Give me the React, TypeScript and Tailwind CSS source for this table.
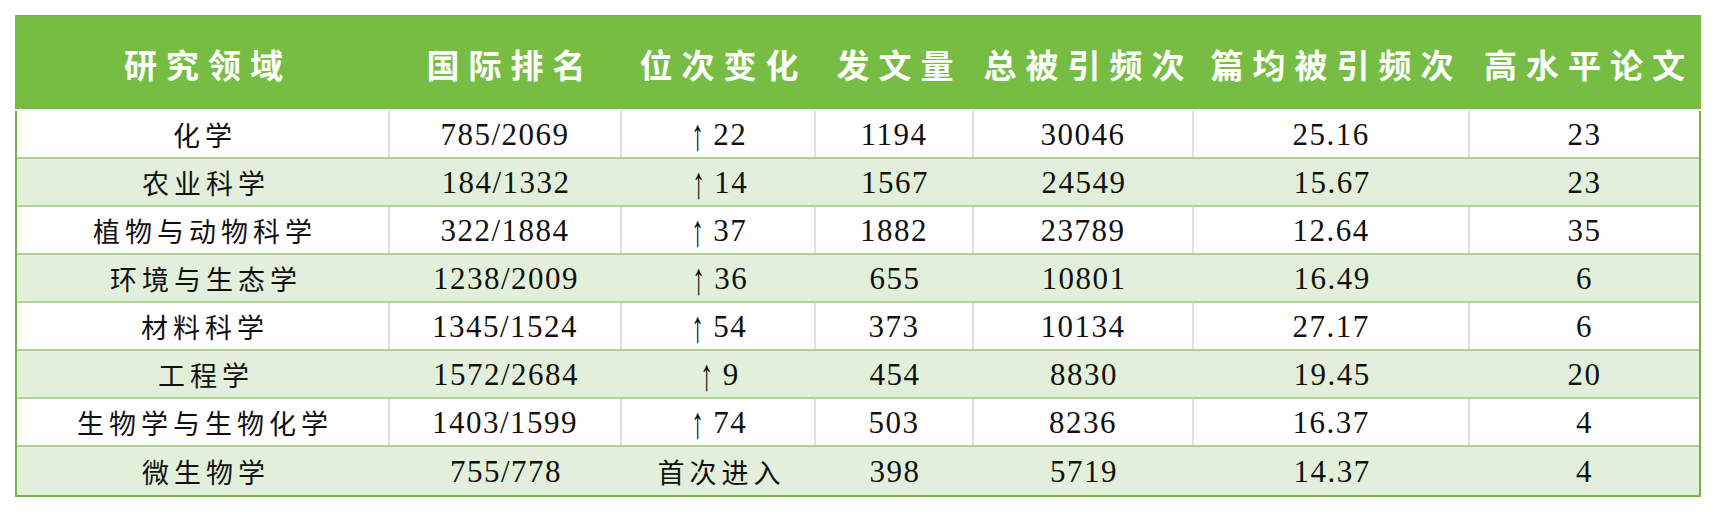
const columns = [
  { title: "研究领域", width: "w-[373px]" },
  { title: "国际排名", width: "w-[232px]" },
  { title: "位次变化", width: "w-[194px]" },
  { title: "发文量", width: "w-[158px]" },
  { title: "总被引频次", width: "w-[220px]" },
  { title: "篇均被引频次", width: "w-[276px]" },
  { title: "高水平论文", width: "w-[229px]" },
];

const rows = [
  ["化学", "785/2069", "↑22", "1194", "30046", "25.16", "23"],
  ["农业科学", "184/1332", "↑14", "1567", "24549", "15.67", "23"],
  ["植物与动物科学", "322/1884", "↑37", "1882", "23789", "12.64", "35"],
  ["环境与生态学", "1238/2009", "↑36", "655", "10801", "16.49", "6"],
  ["材料科学", "1345/1524", "↑54", "373", "10134", "27.17", "6"],
  ["工程学", "1572/2684", "↑9", "454", "8830", "19.45", "20"],
  ["生物学与生物化学", "1403/1599", "↑74", "503", "8236", "16.37", "4"],
  ["微生物学", "755/778", "首次进入", "398", "5719", "14.37", "4"],
];

const cjk = "font-['Noto_Sans_CJK_SC',sans-serif]";
const serif = "font-['Liberation_Serif','Noto_Sans_CJK_SC',serif]";

const Cell = ({ text, col, striped }: { text: string; col: number; striped: boolean }) => {
  const isCjk = /[\u4e00-\u9fff]/.test(text);
  const isLast = col === columns.length - 1;
  // white rows have light grey column rules, green rows have none
  const divider = !striped && !isLast ? "border-r-2 border-[#e0e0e0]" : "";
  return (
    <div
      className={`${columns[col].width} h-full flex items-center justify-center pt-[3px] ${divider}`}
    >
      {text.startsWith("↑") ? (
        <span className={`${serif} text-[31px] tracking-[1.5px] text-[#111] flex items-center`}>
          <span className="font-['Liberation_Serif',serif] text-[34px] leading-none mr-[6px] scale-y-[1.3] scale-x-[0.75] text-black">
            ↑
          </span>
          {text.slice(1)}
        </span>
      ) : isCjk ? (
        <span className={`${cjk} text-[27px] tracking-[5px] mr-[-5px] text-[#111]`}>{text}</span>
      ) : (
        <span className={`${serif} text-[31px] tracking-[1.5px] text-[#111]`}>{text}</span>
      )}
    </div>
  );
};

const App = () => {
  return (
    <div className="w-[1716px] h-[512px] bg-white pt-[15px] pl-[15px]">
      <div className="w-[1686px] border-x-2 border-b-2 border-[#74b34a]">
        {/* Header */}
        <div className="h-[96px] bg-[#77bc43] flex border-b-2 border-[#eef6e8] -mx-[2px] px-[2px]">
          {columns.map((c) => (
            <div
              key={c.title}
              className={`${c.width} flex items-center justify-center pt-[6px]`}
            >
              <span
                className={`${cjk} font-bold text-white text-[33px] tracking-[9px] mr-[-9px]`}
              >
                {c.title}
              </span>
            </div>
          ))}
        </div>

        {/* Body */}
        {rows.map((r, i) => {
          const striped = i % 2 === 1;
          const isLastRow = i === rows.length - 1;
          return (
            <div
              key={r[0]}
              className={`flex h-[48px] ${isLastRow ? "" : "border-b-2 border-[#b2d29c]"} ${
                striped ? "bg-[#e2efda]" : "bg-white"
              }`}
            >
              {r.map((t, j) => (
                <Cell key={j} text={t} col={j} striped={striped} />
              ))}
            </div>
          );
        })}
      </div>
    </div>
  );
};

export default App;
